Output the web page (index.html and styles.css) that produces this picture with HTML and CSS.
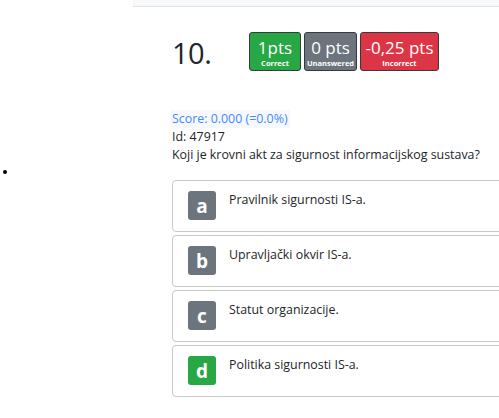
FILE: index.html
```html
<!DOCTYPE html>
<html lang="hr">
<head>
<meta charset="utf-8">
<title>Pitanje 10</title>
<link rel="stylesheet" href="styles.css">
</head>
<body>
<div class="page">
  <aside class="side"><span class="dot"></span></aside>
  <main class="main">
    <div class="topbar"></div>
    <div class="content">
      <div class="head">
        <h2 class="num">10.</h2>
        <div class="pts">
          <div class="pt green"><span class="big">1pts</span><span class="small">Correct</span></div>
          <div class="pt gray"><span class="big">0 pts</span><span class="small">Unanswered</span></div>
          <div class="pt red"><span class="big">-0,25 pts</span><span class="small">Incorrect</span></div>
        </div>
      </div>
      <div class="score">Score: 0.000 (=0.0%)</div>
      <div class="line">Id: 47917</div>
      <div class="line">Koji je krovni akt za sigurnost informacijskog sustava?</div>
      <div class="opts">
        <div class="opt"><span class="let">a</span><span class="txt">Pravilnik sigurnosti IS-a.</span></div>
        <div class="opt"><span class="let">b</span><span class="txt">Upravljački okvir IS-a.</span></div>
        <div class="opt"><span class="let">c</span><span class="txt">Statut organizacije.</span></div>
        <div class="opt"><span class="let ok">d</span><span class="txt">Politika sigurnosti IS-a.</span></div>
      </div>
    </div>
  </main>
</div>
</body>
</html>
```
FILE: styles.css
```css
html, body {
  margin: 0;
  padding: 0;
  background: #fff;
  overflow: hidden;
}
body {
  font-family: "Open Sans", "Noto Sans", sans-serif;
  color: #212529;
  font-size: 12.4px;
  line-height: 18px;
}
.page {
  display: flex;
  width: 499px;
  height: 418px;
  overflow: hidden;
}
.side {
  width: 133px;
  flex: none;
  padding-top: 170px;
  padding-left: 3px;
  box-sizing: border-box;
}
.dot {
  display: block;
  width: 4px;
  height: 4px;
  border-radius: 50%;
  background: #000;
}
.main {
  flex: 1;
  min-width: 0;
}
.topbar {
  height: 6px;
  background: #f8f9fa;
  border-bottom: 1px solid #dee2e6;
}
.content {
  padding-left: 39px;
}
.head {
  display: flex;
  align-items: center;
  margin-top: 25px;
  height: 39px;
}
.num {
  margin: 0;
  width: 77px;
  font-weight: 400;
  font-size: 29px;
  line-height: 39px;
  padding-top: 1px;
  letter-spacing: -0.5px;
}
.pts {
  display: flex;
  gap: 3px;
}
.pt {
  display: flex;
  flex-direction: column;
  align-items: center;
  height: 39px;
  box-sizing: border-box;
  border: 1px solid #343a40;
  border-radius: 3px;
  color: #fff;
  padding: 0 2px;
}
.pt .big {
  font-size: 17px;
  line-height: 20px;
  margin-top: 5px;
  white-space: nowrap;
}
.pt .small {
  font-size: 7.5px;
  line-height: 10px;
  font-weight: 700;
  white-space: nowrap;
}
.green { background: #28a745; width: 52px; }
.gray { background: #6c757d; width: 53px; }
.red { background: #dc3545; width: 79px; }
.score {
  margin-top: 39px;
  display: inline-block;
  color: #3d8bfd;
  background: #f7f8fb;
  padding: 0 2px;
  margin-left: -2px;
}
.line {
  display: block;
}
.opts {
  margin-top: 16px;
  display: flex;
  flex-direction: column;
  gap: 3px;
}
.opt {
  display: flex;
  align-items: flex-start;
  width: 400px;
  box-sizing: border-box;
  border: 1px solid #c6c8ca;
  border-radius: 4px;
  padding: 10px 15px 11px;
  gap: 13px;
}
.let {
  width: 28px;
  height: 29px;
  flex: none;
  border-radius: 3px;
  background: #6c757d;
  color: #fff;
  font-weight: 700;
  font-size: 19px;
  display: flex;
  align-items: center;
  justify-content: center;
}
.let.ok { background: #28a745; }
.txt {
  padding-top: 0;
}
```
